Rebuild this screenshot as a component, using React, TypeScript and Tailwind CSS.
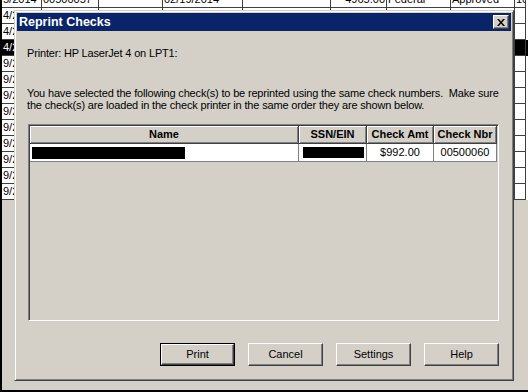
const bgCols = [40, 57, 64, 80, 88, 56, 64, 64, 11]

const topRow = ['5/2014', '00500057', '', '02/19/2014', '', '4965.00', 'Federal', 'Approved', '10000059']

const bgRows = [
  { d: '4/2014', sel: false },
  { d: '4/2014', sel: false },
  { d: '4/2014', sel: true },
  { d: '9/2014', sel: false },
  { d: '9/2014', sel: false },
  { d: '9/2014', sel: false },
  { d: '9/2014', sel: false },
  { d: '9/2014', sel: false },
  { d: '9/2014', sel: false },
  { d: '9/2014', sel: false },
  { d: '9/2014', sel: false },
  { d: '9/2014', sel: false },
]

const BgRow = ({ cells, sel }: { cells: string[]; sel?: boolean }) => (
  <div className={`flex h-[16px] ${sel ? 'bg-black text-white' : 'bg-white text-black'}`}>
    {bgCols.map((w, i) => (
      <div
        key={i}
        style={{ width: w }}
        className={`shrink-0 overflow-hidden whitespace-nowrap border-r border-b border-[#404040] px-[1px] leading-[15px] ${
          i === 5 ? 'text-right' : ''
        }`}
      >
        {cells[i]}
      </div>
    ))}
  </div>
)

const Btn = ({ label, def }: { label: string; def?: boolean }) => (
  <div className={`w-[75px] h-[23px] ${def ? 'border border-black' : ''}`}>
    <div className="w-full h-full flex items-center justify-center bg-[#d4d0c8] border border-t-white border-l-white border-r-[#404040] border-b-[#404040] shadow-[inset_-1px_-1px_0_#808080]">
      {label}
    </div>
  </div>
)

const headers = [
  { label: 'Name', w: 'w-[269px]' },
  { label: 'SSN/EIN', w: 'w-[68px]' },
  { label: 'Check Amt', w: 'w-[67px]' },
  { label: 'Check Nbr', w: 'w-[63px]' },
]

export default function App() {
  return (
    <div className="relative w-[528px] h-[392px] overflow-hidden bg-[#d4d0c8] border-l-2 border-b-2 border-black font-['Liberation_Sans',Arial,sans-serif] text-[11px] text-black">
      {/* window behind */}
      <div className="-mt-[8px]">
        <BgRow cells={topRow} />
        {bgRows.map((r, i) => (
          <BgRow key={i} cells={[r.d]} sel={r.sel} />
        ))}
      </div>

      {/* Reprint Checks dialog */}
      <div className="absolute left-[12px] top-[10px] w-[500px] h-[371px] bg-[#d4d0c8] border border-t-[#d4d0c8] border-l-[#d4d0c8] border-r-[#404040] border-b-[#404040] shadow-[inset_1px_1px_0_#fff,inset_-1px_-1px_0_#808080] p-[2px] flex flex-col">
        <div className="h-[18px] bg-[#0a246a] flex items-center justify-between pl-[2px] pr-[2px]">
          <span className="text-white font-bold text-[12.5px] leading-none">Reprint Checks</span>
          <div className="w-[16px] h-[14px] bg-[#d4d0c8] border border-t-white border-l-white border-r-[#404040] border-b-[#404040] shadow-[inset_-1px_-1px_0_#808080] flex items-center justify-center">
            <svg width="8" height="7" viewBox="0 0 8 7">
              <path d="M0 0h2l2 2.5L6 0h2L5 3.5 8 7H6L4 4.5 2 7H0l3-3.5z" fill="black" />
            </svg>
          </div>
        </div>

        <div className="flex-1 flex flex-col px-[10px] tracking-[-0.17px]">
          <div className="mt-[16px] leading-[12px]">Printer: HP LaserJet 4 on LPT1:</div>
          <div className="mt-[28px] leading-[12px] whitespace-pre">
            {'You have selected the following check(s) to be reprinted using the same check numbers.  Make sure'}
            <br />
            {'the check(s) are loaded in the check printer in the same order they are shown below.'}
          </div>

          <div className="mt-[13px] ml-[1px] w-[471px] h-[197px] border border-t-[#808080] border-l-[#808080] border-r-white border-b-white shadow-[inset_1px_1px_0_#404040,inset_-1px_-1px_0_#d4d0c8] p-[1px] tracking-normal">
            <div className="flex">
              {headers.map((h) => (
                <div
                  key={h.label}
                  className={`${h.w} h-[18px] shrink-0 flex items-center justify-center font-bold border-r border-b border-[#404040] shadow-[inset_1px_1px_0_#fff,inset_-1px_-1px_0_#808080]`}
                >
                  {h.label}
                </div>
              ))}
            </div>
            <div className="flex h-[18px] bg-white">
              <div className="w-[269px] shrink-0 border-r border-b border-[#808080] flex items-center pl-[2px]">
                <div className="w-[153px] h-[12px] bg-black" />
              </div>
              <div className="w-[68px] shrink-0 border-r border-b border-[#808080] flex items-center pl-[4px]">
                <div className="w-[61px] h-[11px] bg-black" />
              </div>
              <div className="w-[67px] shrink-0 border-r border-b border-[#808080] flex items-center justify-center">
                $992.00
              </div>
              <div className="w-[63px] shrink-0 border-r border-b border-[#808080] flex items-center justify-center">
                00500060
              </div>
            </div>
          </div>

          <div className="mt-[22px] flex justify-end gap-[13px] pr-[2px] tracking-normal">
            <Btn label="Print" def />
            <Btn label="Cancel" />
            <Btn label="Settings" />
            <Btn label="Help" />
          </div>
        </div>
      </div>
    </div>
  )
}
